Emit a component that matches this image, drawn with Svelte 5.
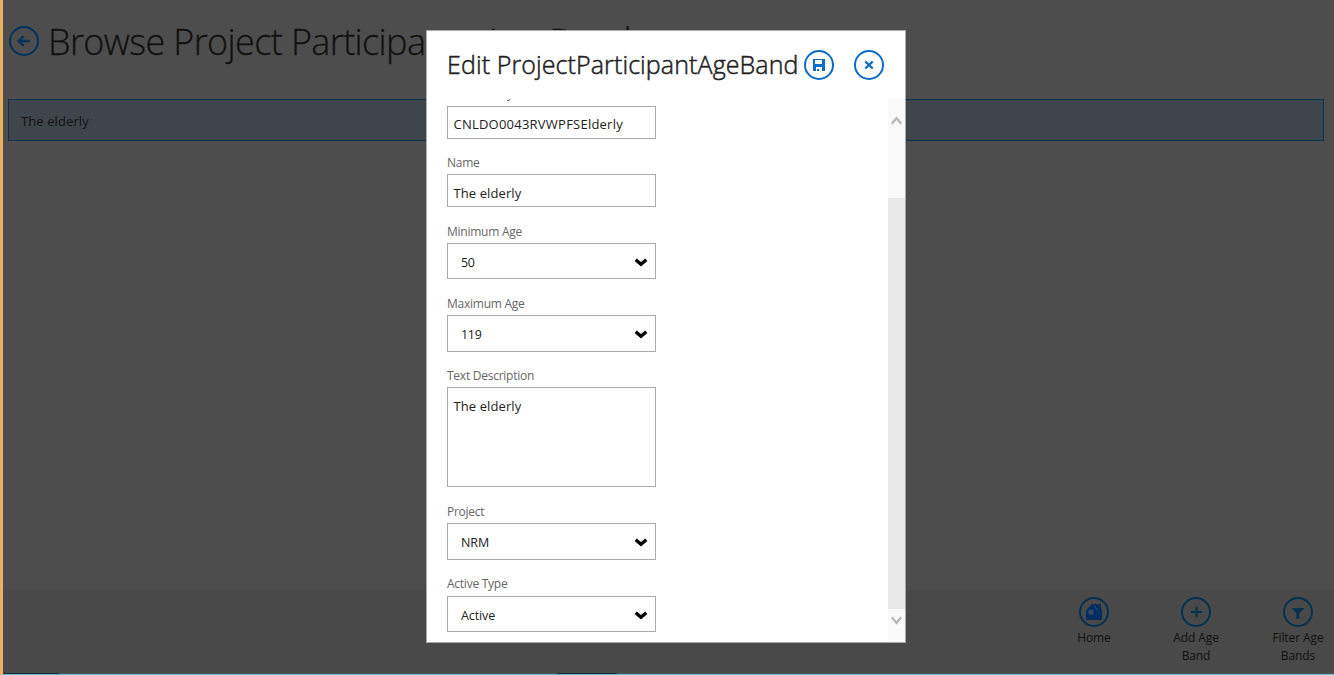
<script>
  const fields = [
    { label: 'Business Key', value: 'CNLDO0043RVWPFSElderly', kind: 'input', gap: 26, height: 33, spacing: 0.23 },
    { label: 'Name', value: 'The elderly', kind: 'input', gap: 35, height: 33, spacing: 0.1 },
    { label: 'Minimum Age', value: '50', kind: 'select', gap: 36, height: 36, spacing: -0.3 },
    { label: 'Maximum Age', value: '119', kind: 'select', gap: 36, height: 37, spacing: -0.3 },
    { label: 'Text Description', value: 'The elderly', kind: 'area', gap: 35, height: 100, spacing: 0.1 },
    { label: 'Project', value: 'NRM', kind: 'select', gap: 36, height: 37, spacing: -0.1 },
    { label: 'Active Type', value: 'Active', kind: 'select', gap: 36, height: 36, spacing: -0.1 }
  ];
</script>

<div class="app">
  <header class="page-head">
    <svg class="ring back" viewBox="0 0 30 30"><circle cx="15" cy="15" r="14" /><path d="M21 15H10M14.7 10.2L9.6 15l5.1 4.8" stroke-width="2.3" /></svg>
    <h1>Browse Project Participants Age Band</h1>
  </header>
  <div class="row">The elderly</div>

  <footer>
    <div class="command home">
      <svg class="ring" viewBox="0 0 30 30">
        <circle cx="15" cy="15" r="14" />
        <path class="solid" d="M7 13.5L13 7h5l1.5 1.5V7H22v4l1 3v9H7z" />
        <path class="cut" d="M14 7.5l5 6M10 13.5h4v3.5h-4zM12 13.5V17M10 15.3h4" />
      </svg>
      <span>Home</span>
    </div>
    <div class="command">
      <svg class="ring" viewBox="0 0 30 30"><circle cx="15" cy="15" r="14" /><path d="M10 15h11M15.5 9.5v11" /></svg>
      <span>Add Age<br />Band</span>
    </div>
    <div class="command">
      <svg class="ring" viewBox="0 0 30 30"><circle cx="15" cy="15" r="14" /><path class="solid" d="M8.5 11h13L16.3 16.3V22h-3v-5.7z" /></svg>
      <span>Filter Age<br />Bands</span>
    </div>
  </footer>
  <div class="edge"><i class="first"></i><i class="second"></i></div>

  <div class="modal">
    <div class="modal-head">
      <h2>Edit ProjectParticipantAgeBand</h2>
      <svg class="ring" viewBox="0 0 30 30">
        <circle cx="15" cy="15" r="14" />
        <path class="solid" fill-rule="evenodd" d="M9 9h12v12H9zM11 10v4h7v-4zM12 17v4h1v-2h2v2H18v-4z" />
      </svg>
      <svg class="ring" viewBox="0 0 30 30"><circle cx="15" cy="15" r="14" /><path d="M11.3 11.5l7.4 7M18.7 11.5l-7.4 7" stroke-width="2.4" /></svg>
    </div>
    <div class="modal-body">
      <form>
        {#each fields as f}
          <div class="field">
            <div class="label" style="height:{f.gap}px"><span>{f.label}</span></div>
            <div class="box {f.kind}" style="height:{f.height}px">
              <span style="letter-spacing:{f.spacing}px">{f.value}</span>
              {#if f.kind === 'select'}
                <svg class="caret" viewBox="0 0 12 8"><path d="M1.3 1.6L6 5.6l4.7-4" /></svg>
              {/if}
            </div>
          </div>
        {/each}
      </form>
      <div class="scrollbar">
        <svg viewBox="0 0 11 9"><path d="M0.8 7.6L5.5 2.2l4.7 5.4" /></svg>
        <div class="thumb"></div>
        <svg class="down" viewBox="0 0 11 9"><path d="M0.8 1.4l4.7 5.4 4.7-5.4" /></svg>
      </div>
    </div>
  </div>
</div>

<style>
  :global(body) { margin: 0; overflow: hidden; }
  .app {
    position: relative;
    display: flex;
    flex-direction: column;
    width: 1334px;
    height: 675px;
    box-sizing: border-box;
    border-left: 3px solid #ecb062;
    background: #4d4d4d;
    color: #111;
    font-family: 'Open Sans', 'Noto Sans', sans-serif;
    overflow: hidden;
  }
  h1, h2 { margin: 0; white-space: nowrap; }
  .page-head { display: flex; align-items: center; height: 82px; padding-left: 6px; gap: 9px; }
  h1 { font-size: 36px; line-height: 48px; letter-spacing: -0.62px; font-weight: 300; padding-top: 1px; -webkit-text-stroke: 0.3px #111; }
  .ring { width: 30px; height: 30px; flex: none; fill: none; stroke: #0a6cc8; stroke-width: 2; display: block; }
  .ring .solid { fill: #0a6cc8; stroke: none; }
  .ring.back { stroke: #05305c; }
  .row {
    margin: 17px 10px 0 5px;
    height: 42px;
    box-sizing: border-box;
    border: 1px solid #0b3350;
    background: #3e454b;
    padding-left: 12px;
    font-size: 13px;
    line-height: 43px;
    letter-spacing: 0.1px;
  }
  footer { display: flex; justify-content: flex-end; gap: 30px; height: 76px; margin-top: auto; padding-top: 7px; background: #494949; }
  .command { width: 72px; display: flex; flex-direction: column; align-items: center; font-size: 12px; line-height: 18px; text-align: center; letter-spacing: -0.1px; }
  .command span { margin-top: 2px; white-space: nowrap; }
  footer .ring { stroke: #06304f; }
  footer .ring .solid { fill: #06304f; }
  footer .home .ring .solid { fill: #032c60; }
  footer .ring .cut { stroke: #4d5966; stroke-width: 0.8; }
  .edge { display: flex; height: 2px; box-sizing: border-box; border-bottom: 1px solid #5bc0dc; background: #555; }
  .edge i { height: 1px; background: #252832; }
  .first { width: 56px; }
  .second { width: 60px; margin-left: 498px; }

  .modal {
    position: absolute;
    left: 423px;
    top: 30px;
    width: 480px;
    height: 613px;
    box-sizing: border-box;
    display: flex;
    flex-direction: column;
    border: 1px solid #aaa;
    background: #fff;
    color: #222;
  }
  .modal-head { height: 68px; flex: none; display: flex; align-items: center; padding-left: 20px; gap: 20px; box-sizing: border-box; }
  h2 { width: 337px; font-size: 25px; line-height: 34px; letter-spacing: 0.1px; font-weight: 300; padding-bottom: 2px; -webkit-text-stroke: 0.5px #222; }
  .modal-body { flex: 1; min-height: 0; display: flex; justify-content: space-between; overflow: hidden; }
  form { width: 209px; margin: -19px 0 0 20px; }
  .label { display: flex; align-items: flex-end; box-sizing: border-box; padding-bottom: 3px; font-size: 12px; line-height: 17px; color: #666; letter-spacing: -0.25px; white-space: nowrap; }
  .field:first-child .label { letter-spacing: -0.6px; padding-bottom: 4px; }
  .field:last-child .label { padding-bottom: 4px; }
  .box { display: flex; align-items: center; justify-content: space-between; box-sizing: border-box; border: 1px solid #aaa; padding: 4px 6px 0 5.5px; font-size: 13px; line-height: 18px; }
  .field:first-child .box { padding-top: 3px; }
  .select { padding: 3px 7px 0 13px; font-size: 12.5px; }
  .area { align-items: flex-start; padding-top: 9px; }
  .caret { width: 14px; height: 9px; margin-top: -1px; fill: none; stroke: #000; stroke-width: 3; }
  .scrollbar { width: 17px; display: flex; flex-direction: column; align-items: center; background: #f9f9f9; }
  .scrollbar svg { width: 11px; height: 9px; flex: none; margin-top: 17px; fill: none; stroke: #bbb; stroke-width: 2.4; }
  .thumb { width: 17px; height: 411px; margin-top: 73px; flex: none; background: #e9e9e9; }
  .scrollbar .down { margin-top: 7px; }
</style>
